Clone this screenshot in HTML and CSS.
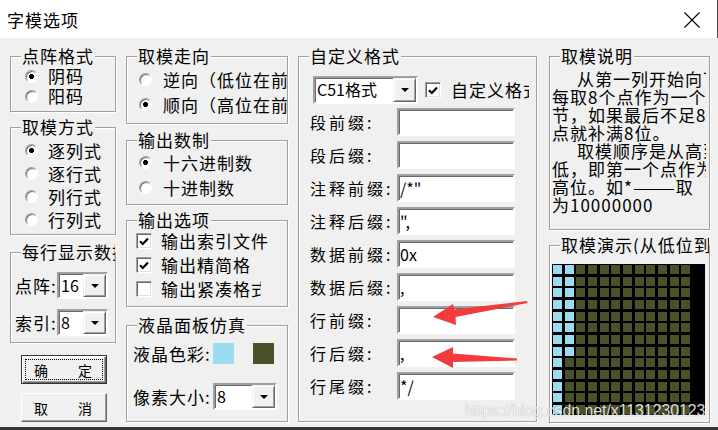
FILE: index.html
```html
<!DOCTYPE html>
<html>
<head>
    <title>字模选项</title>
    <link rel="stylesheet" href="styles.css">
</head>
<body>
    <div class="window">
        <div class="titlebar">
            <span class="title">字模选项</span>
            <svg class="close" width="16" height="16" viewBox="0 0 16 16">
                <path d="M0.5 0.5 L15.5 15.5 M15.5 0.5 L0.5 15.5" stroke="#000" stroke-width="1.1" fill="none"/>
            </svg>
        </div>

        <div class="dialog">
            <!-- left column -->
            <div class="col col-1">
                <div class="group g-dot">
                    <div class="group-title">点阵格式</div>
                    <div class="group-body">
                        <div class="opt"><span class="radio on"></span>阴码</div>
                        <div class="opt"><span class="radio"></span>阳码</div>
                    </div>
                </div>
                <div class="group g-mode">
                    <div class="group-title">取模方式</div>
                    <div class="group-body">
                        <div class="opt"><span class="radio on"></span>逐列式</div>
                        <div class="opt"><span class="radio"></span>逐行式</div>
                        <div class="opt"><span class="radio"></span>列行式</div>
                        <div class="opt"><span class="radio"></span>行列式</div>
                    </div>
                </div>
                <div class="group g-per-line">
                    <div class="group-title">每行显示数据</div>
                    <div class="group-body">
                        <div class="field">
                            <span class="short-label">点阵:</span>
                            <div class="combo combo-small"><span class="combo-val">16</span><span class="combo-btn"></span></div>
                        </div>
                        <div class="field">
                            <span class="short-label">索引:</span>
                            <div class="combo combo-small"><span class="combo-val">8</span><span class="combo-btn"></span></div>
                        </div>
                    </div>
                </div>
                <div class="buttons">
                    <button class="btn btn-default"><span class="btn-face"><span>确</span><span>定</span></span></button>
                    <button class="btn"><span class="btn-face"><span>取</span><span>消</span></span></button>
                </div>
            </div>

            <!-- second column -->
            <div class="col col-2">
                <div class="group g-dir">
                    <div class="group-title">取模走向</div>
                    <div class="group-body">
                        <div class="opt"><span class="radio"></span>逆向（低位在前）</div>
                        <div class="opt"><span class="radio on"></span>顺向（高位在前）</div>
                    </div>
                </div>
                <div class="group g-radix">
                    <div class="group-title">输出数制</div>
                    <div class="group-body">
                        <div class="opt"><span class="radio on"></span>十六进制数</div>
                        <div class="opt"><span class="radio"></span>十进制数</div>
                    </div>
                </div>
                <div class="group g-output">
                    <div class="group-title">输出选项</div>
                    <div class="group-body">
                        <div class="opt"><span class="check"><svg width="10" height="9" viewBox="0 0 10 9"><path d="M1 4.2 L3.8 7 L9 1.5" stroke="#000" stroke-width="2.2" fill="none"/></svg></span>输出索引文件</div>
                        <div class="opt opt-cut1"><span class="check"><svg width="10" height="9" viewBox="0 0 10 9"><path d="M1 4.2 L3.8 7 L9 1.5" stroke="#000" stroke-width="2.2" fill="none"/></svg></span>输出精简格式</div>
                        <div class="opt opt-cut2"><span class="check"></span>输出紧凑格式</div>
                    </div>
                </div>
                <div class="group g-lcd">
                    <div class="group-title">液晶面板仿真</div>
                    <div class="group-body">
                        <div class="field lcd-colors">
                            <span class="lcd-label">液晶色彩:</span>
                            <span class="swatch swatch-on"></span>
                            <span class="swatch swatch-off"></span>
                        </div>
                        <div class="field">
                            <span class="lcd-label">像素大小:</span>
                            <div class="combo combo-pixel"><span class="combo-val">8</span><span class="combo-btn"></span></div>
                        </div>
                    </div>
                </div>
            </div>

            <!-- custom format -->
            <div class="col col-3">
                <div class="group g-custom">
                    <div class="group-title">自定义格式</div>
                    <div class="group-body">
                        <div class="custom-head">
                            <div class="combo combo-format"><span class="combo-val">C51格式</span><span class="combo-btn"></span></div>
                            <span class="check"><svg width="10" height="9" viewBox="0 0 10 9"><path d="M1 4.2 L3.8 7 L9 1.5" stroke="#000" stroke-width="2.2" fill="none"/></svg></span>
                            <span class="custom-label">自定义格式</span>
                        </div>
                        <div class="fields">
                            <div class="field"><span class="field-label">段前缀:</span><input class="text" value=""></div>
                            <div class="field"><span class="field-label">段后缀:</span><input class="text" value=""></div>
                            <div class="field"><span class="field-label">注释前缀:</span><input class="text" value="/*&quot;"></div>
                            <div class="field"><span class="field-label">注释后缀:</span><input class="text" value="&quot;,"></div>
                            <div class="field"><span class="field-label">数据前缀:</span><input class="text" value="0x"></div>
                            <div class="field"><span class="field-label">数据后缀:</span><input class="text" value=","></div>
                            <div class="field"><span class="field-label">行前缀:</span><input class="text" value=""></div>
                            <div class="field"><span class="field-label">行后缀:</span><input class="text" value=","></div>
                            <div class="field"><span class="field-label">行尾缀:</span><input class="text" value="*/"></div>
                        </div>
                    </div>
                </div>
            </div>

            <!-- help + preview -->
            <div class="col col-4">
                <div class="group g-help">
                    <div class="group-title">取模说明</div>
                    <div class="group-body help">
                        <div class="indent">从第一列开始向下</div>
                        <div>每取8个点作为一个字</div>
                        <div>节，如果最后不足8个</div>
                        <div>点就补满8位。</div>
                        <div class="indent">取模顺序是从高到</div>
                        <div>低，即第一个点作为最</div>
                        <div>高位。如*———取</div>
                        <div>为10000000</div>
                    </div>
                </div>
                <div class="group g-demo">
                    <div class="group-title">取模演示(从低位到高位)</div>
                    <div class="group-body">
                        <div id="led" class="led"></div>
                    </div>
                </div>
            </div>
        </div>

        <svg class="arrows" width="718" height="430" viewBox="0 0 718 430">
            <polygon points="433,317 453,304 454,309.5 527,301 527.5,303 455.5,317 456,325" fill="#f23b3b"/>
            <polygon points="432,357 453,347 453,353.5 517,358.5 517,360.5 453,362 453,368" fill="#f23b3b"/>
        </svg>
        <div class="watermark">https://blog.csdn.net/x1131230123</div>
    </div>

    <script>
        // 12 x 13 preview: first column lit, second column lit for the first byte
        const led = document.getElementById('led');
        for (let r = 0; r < 13; r++) {
            for (let c = 0; c < 12; c++) {
                const dot = document.createElement('span');
                dot.className = (c === 0 || (c === 1 && r < 8)) ? 'dot on' : 'dot';
                led.appendChild(dot);
            }
        }
    </script>
</body>
</html>
```

FILE: styles.css
```css
* {
    box-sizing: border-box;
}
body {
    margin: 0;
    font: 17px/18px "Noto Sans CJK SC", sans-serif;
    letter-spacing: 1px;
    color: #000;
    background: #f0f0f0;
}
.window {
    position: relative;
    width: 718px;
    height: 430px;
    overflow: hidden;
    background: #f0f0f0;
    border-bottom: 3px solid #353535;
}
.titlebar {
    height: 38px;
    background: #fff;
    display: flex;
    align-items: center;
    justify-content: space-between;
    padding: 1px 17px 0 7px;
    border-right: 1px solid #4a4a4a;
}
.title {
    font-size: 17px;
    line-height: 20px;
}
.dialog {
    display: flex;
    height: 389px;
    padding: 18px 0 0 10px;
}
.col-1 { width: 106px; margin-right: 10px; }
.col-2 { width: 162px; margin-right: 10px; }
.col-3 { width: 239px; margin-right: 12px; }
.col-4 { width: 161px; }

/* etched group box */
.group {
    border: 1px solid #a0a0a0;
    box-shadow: inset 1px 1px #fff, 1px 1px #fff;
}
.group-title {
    width: fit-content;
    max-width: calc(100% - 10px);
    margin: -10px 0 0 10px;
    padding: 0 1px;
    line-height: 18px;
    background: #f0f0f0;
    white-space: nowrap;
    overflow: hidden;
}
.opt {
    display: flex;
    align-items: center;
    white-space: nowrap;
    overflow: hidden;
}
.radio {
    flex: none;
    width: 13px;
    height: 13px;
    margin-right: 10px;
    border-radius: 50%;
    border: 1px solid;
    border-color: #a0a0a0 #fff #fff #a0a0a0;
    background: #fff;
    box-shadow: inset 1px 1px #777;
}
.radio.on {
    background: radial-gradient(circle, #000 2.2px, #fff 2.8px);
}
.check {
    flex: none;
    width: 16px;
    height: 16px;
    display: flex;
    align-items: center;
    justify-content: center;
    border: 1px solid;
    border-color: #a0a0a0 #fff #fff #a0a0a0;
    background: #fff;
    box-shadow: inset 1px 1px #696969, inset -1px -1px #e3e3e3;
}

/* column 1 */
.g-dot { height: 56px; margin-bottom: 15px; }
.g-dot .group-body { padding: 1px 0 0 14px; }
.g-dot .opt { height: 20px; }
.g-mode { height: 108px; margin-bottom: 17px; }
.g-mode .group-body { padding: 3px 0 0 14px; }
.g-mode .opt { height: 23px; }
.g-per-line { height: 91px; margin-bottom: 12px; }
.g-per-line .group-body {
    display: flex;
    flex-direction: column;
    gap: 10px;
    padding: 11px 0 0 4px;
}
.field {
    display: flex;
    align-items: center;
}
.short-label {
    width: 42px;
    white-space: nowrap;
}

.combo {
    display: flex;
    height: 27px;
    border: 2px solid;
    border-color: #a0a0a0 #fff #fff #a0a0a0;
    background: #fff;
    box-shadow: inset 1px 1px #696969;
}
.combo-val {
    flex: 1;
    padding-left: 2px;
    font-size: 16px;
    line-height: 23px;
    letter-spacing: 0;
    white-space: nowrap;
    overflow: hidden;
}
.combo-btn {
    flex: none;
    width: 23px;
    display: flex;
    align-items: center;
    justify-content: center;
    background: #f0f0f0;
    border: 1px solid;
    border-color: #f0f0f0 #696969 #696969 #f0f0f0;
    box-shadow: inset 1px 1px #fff, inset -1px -1px #a0a0a0;
}
.combo-btn::before {
    content: "";
    border-top: 4px solid #000;
    border-left: 4px solid transparent;
    border-right: 4px solid transparent;
}
.combo-small { width: 51px; }
.combo-pixel { width: 64px; }
.combo-format { width: 105px; height: 28px; }

.buttons {
    display: flex;
    flex-direction: column;
    gap: 9px;
    padding-left: 11px;
}
.btn {
    width: 86px;
    height: 29px;
    padding: 3px;
    font: 14px/18px "Noto Sans CJK SC", sans-serif;
    background: #f0f0f0;
    border: 1px solid;
    border-color: #fff #696969 #696969 #fff;
    box-shadow: inset -1px -1px #a0a0a0;
}
.btn-default {
    border: 1px solid #333;
    box-shadow: inset 1px 1px #fff, inset -1px -1px #696969, inset -2px -2px #a0a0a0;
}
.btn-face {
    display: flex;
    justify-content: space-between;
    align-items: center;
    height: 100%;
    padding: 0 10px 0 8px;
    border: 1px dotted transparent;
}
.btn-default .btn-face {
    border-color: #000;
}

/* column 2 */
.g-dir { height: 68px; margin-bottom: 16px; }
.g-dir .group-body { padding: 2px 0 0 12px; }
.g-dir .opt { height: 25px; }
.g-radix { height: 65px; margin-bottom: 15px; }
.g-radix .group-body { padding: 1px 0 0 12px; }
.g-radix .opt { height: 25px; }
.g-dir .radio, .g-radix .radio { margin-right: 11px; }
.g-output { height: 87px; margin-bottom: 18px; }
.g-output .group-body { padding: 0 0 0 9px; }
.g-output .opt { height: 24px; }
.g-output .check { margin-right: 9px; }
.opt-cut1 { width: 115px; }
.opt-cut2 { width: 125px; }
.g-lcd { height: 97px; }
.g-lcd .group-body { padding: 9px 0 0 6px; }
.lcd-colors { height: 21px; margin-bottom: 19px; }
.lcd-label {
    width: 80px;
    white-space: nowrap;
}
.swatch {
    width: 21px;
    height: 21px;
}
.swatch-on { background: #9cdcf0; }
.swatch-off { background: #4a5128; margin-left: 19px; }

/* custom format */
.g-custom { height: 366px; }
.g-custom .group-body { padding: 11px 0 0 11px; }
.custom-head {
    display: flex;
    align-items: center;
    height: 28px;
    margin: 0 0 4px 3px;
}
.custom-head .check { margin-left: 7px; }
.custom-label {
    width: 78px;
    margin-left: 10px;
    white-space: nowrap;
    overflow: hidden;
}
.fields {
    display: flex;
    flex-direction: column;
    gap: 5px;
}
.field-label {
    width: 87px;
    font-size: 16px;
    letter-spacing: 3px;
    white-space: nowrap;
}
.text {
    width: 118px;
    height: 28px;
    margin: 0;
    padding: 0 1px;
    font: 16px "Noto Sans CJK SC", sans-serif;
    letter-spacing: 0;
    color: #000;
    background: #fff;
    border: 2px solid;
    border-color: #a0a0a0 #fff #fff #a0a0a0;
    box-shadow: inset 1px 1px #696969;
    outline: none;
}

/* help and preview */
.g-help { height: 174px; margin-bottom: 15px; }
.help {
    padding: 5px 3px 0 2px;
}
.help div {
    height: 18px;
    white-space: nowrap;
    overflow: hidden;
}
.help .indent { padding-left: 25px; }
.g-demo { height: 178px; }
.g-demo .group-body { padding: 10px 0 0 2px; }
.led {
    width: 153px;
    height: 151px;
    padding: 1px 0 0 1px;
    background: #000;
    display: grid;
    grid-template-columns: repeat(12, 9px);
    grid-auto-rows: 9px;
    gap: 2.67px;
}
.dot { background: #4a5128; }
.dot.on { background: #9cdcf0; }

/* overlays */
.arrows {
    position: absolute;
    left: 0;
    top: 0;
    pointer-events: none;
}
.watermark {
    position: absolute;
    left: 465px;
    top: 403px;
    font: 15.8px/16px "Liberation Sans", sans-serif;
    letter-spacing: 0;
    color: rgba(255, 255, 255, 0.85);
    text-shadow: 0 0 1px rgba(0, 0, 0, 0.35);
    white-space: nowrap;
}
```
